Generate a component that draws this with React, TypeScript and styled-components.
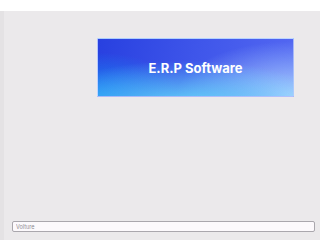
import React from "react";
import styled, { createGlobalStyle } from "styled-components";

const Global = createGlobalStyle`
  html, body { margin: 0; padding: 0; background: #ffffff; }
  body { font-family: Inter, "Noto Sans", sans-serif; }
`;

const Page = styled.div`
  width: 320px;
  height: 240px;
  padding-top: 11px;
  box-sizing: border-box;
  background: #ffffff;
  display: flex;
  flex-direction: column;
`;

const Body = styled.div`
  flex: 1;
  display: flex;
  flex-direction: row;
`;

const Rail = styled.div`
  width: 4px;
  background: #e4e2e4;
`;

const Content = styled.main`
  flex: 1;
  background: #ebe9eb;
  display: flex;
  flex-direction: column;
  padding: 27px 5px 8px 8px;
`;

const BannerRow = styled.div`
  display: flex;
  padding-left: 85px;
  padding-right: 21px;
`;

const Banner = styled.div`
  flex: 1;
  height: 59px;
  box-sizing: border-box;
  border: 1px solid rgba(200, 215, 255, 0.8);
  display: flex;
  align-items: center;
  justify-content: center;
  background:
    radial-gradient(ellipse 100% 110% at 45% 120%, rgba(100, 218, 250, 1) 0%, rgba(100, 218, 250, 0) 75%),
    radial-gradient(ellipse 75% 120% at 100% 100%, rgba(170, 208, 255, 1) 0%, rgba(170, 208, 255, 0) 80%),
    radial-gradient(ellipse 50% 90% at 0% 100%, rgba(25, 140, 245, 0.95) 0%, rgba(25, 140, 245, 0) 85%),
    linear-gradient(100deg, #2840e0 0%, #3f56ea 50%, #5468f2 100%);
`;

const Title = styled.h1`
  margin: 0;
  color: #ffffff;
  font-family: Inter, "Noto Sans", sans-serif;
  font-weight: 700;
  font-size: 13px;
`;

const Spacer = styled.div`
  flex: 1;
`;

const Field = styled.input`
  height: 11px;
  box-sizing: border-box;
  width: 100%;
  border: 1px solid #aaa7ad;
  border-radius: 2px;
  background: #fcf9fc;
  padding: 0 0 0 3px;
  font-family: Inter, "Noto Sans", sans-serif;
  font-size: 5.5px;
  outline: none;
  &::placeholder { color: #8e8b91; }
`;

export default function App() {
  return (
    <>
      <Global />
      <Page>
        <Body>
          <Rail />
          <Content>
            <BannerRow>
              <Banner>
                <Title>E.R.P Software</Title>
              </Banner>
            </BannerRow>
            <Spacer />
            <Field placeholder="Volture" />
          </Content>
        </Body>
      </Page>
    </>
  );
}
